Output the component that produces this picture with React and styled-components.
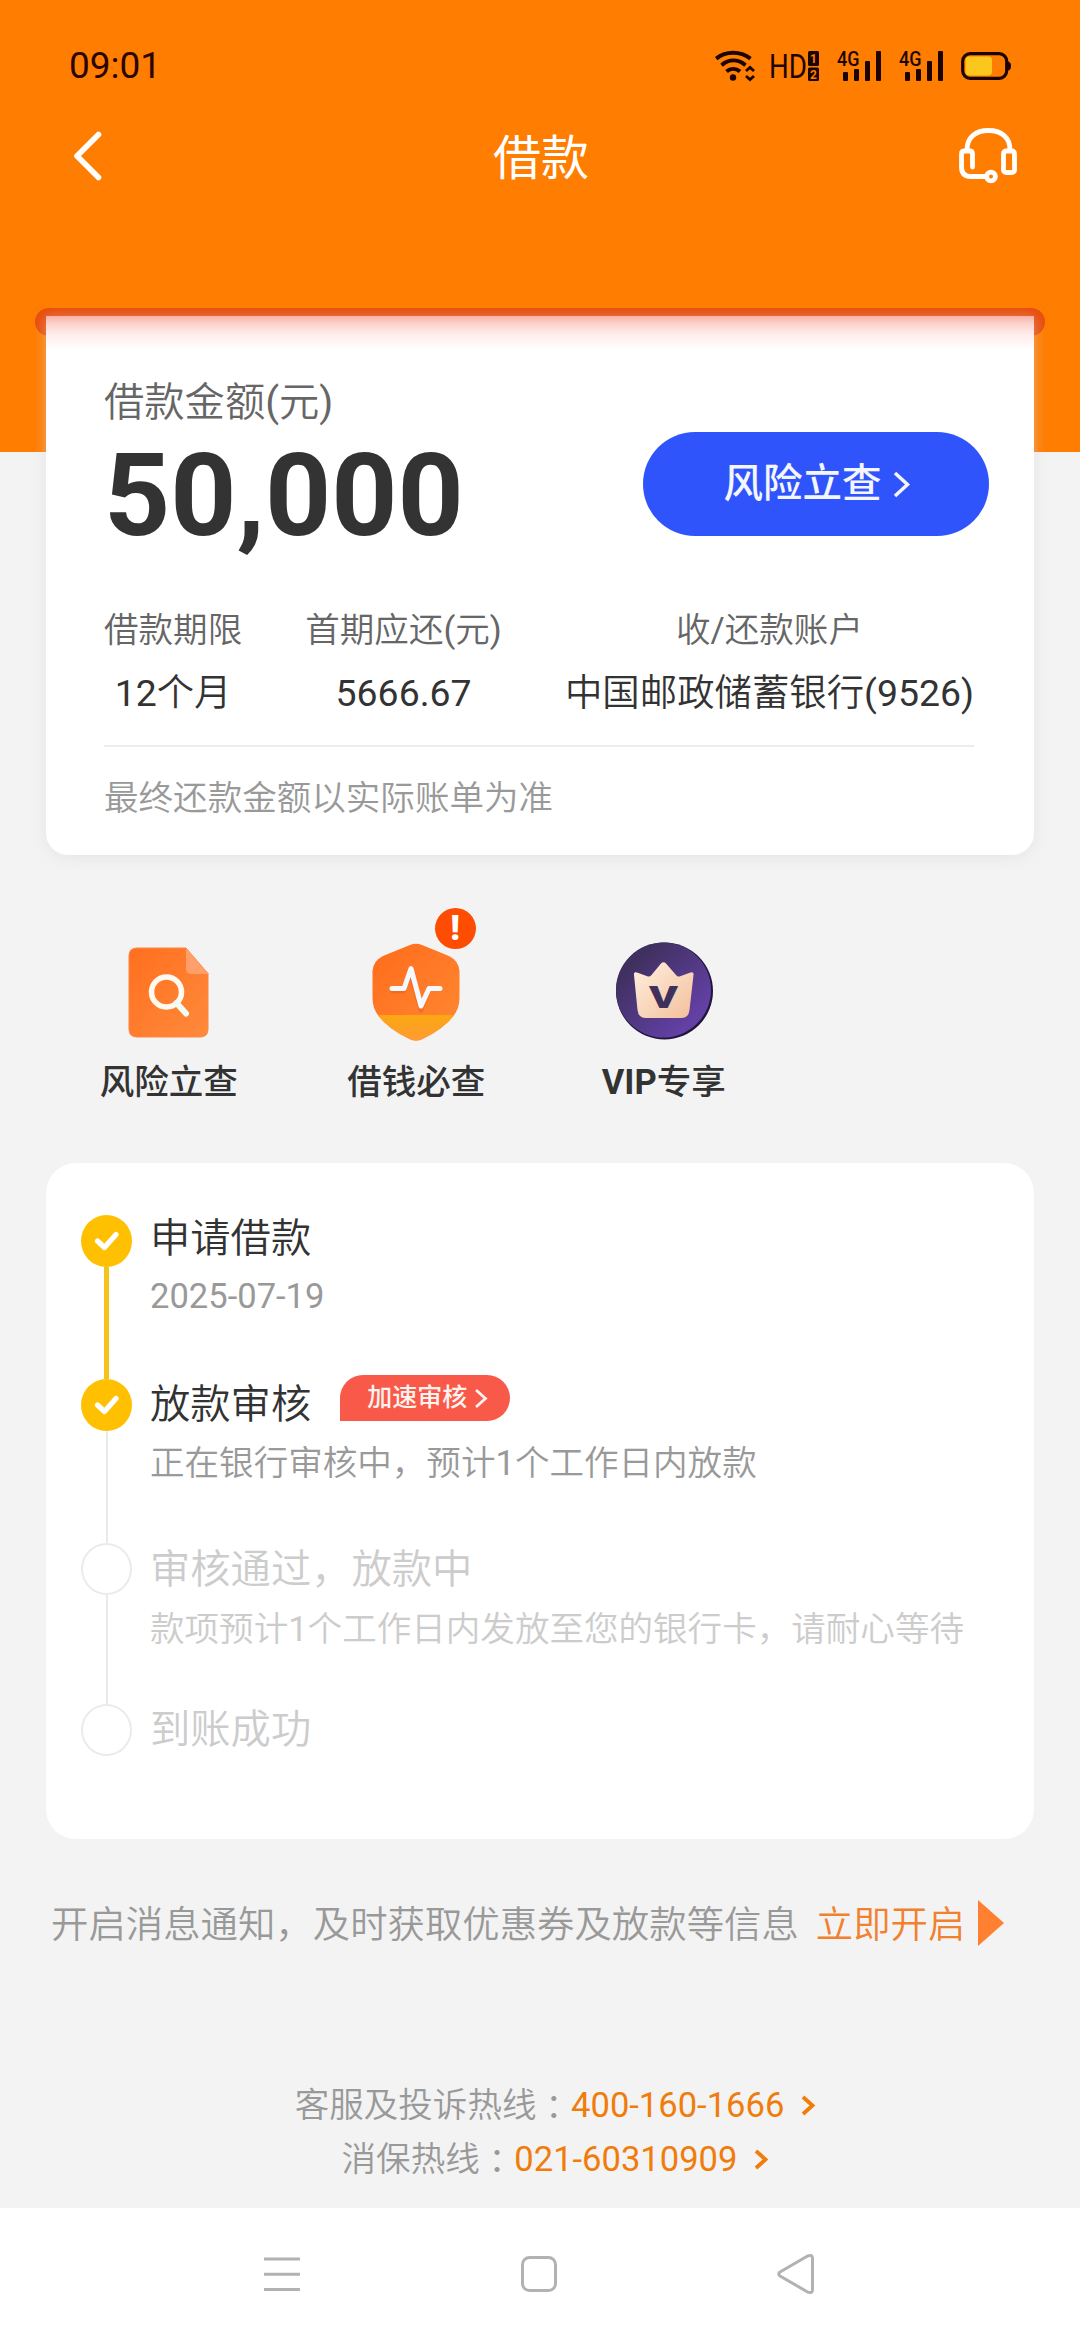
import styled, { createGlobalStyle } from "styled-components";

const steps = [
  { title: "申请借款", desc: "2025-07-19", state: "done", height: 164, shift: 0, gap: 4 },
  {
    title: "放款审核",
    desc: "正在银行审核中，预计1个工作日内放款",
    state: "active",
    height: 164,
    tag: "加速审核",
    shift: 2,
    gap: 5,
  },
  {
    title: "审核通过，放款中",
    desc: "款项预计1个工作日内发放至您的银行卡，请耐心等待",
    state: "todo",
    height: 161,
    shift: 3,
    gap: 6,
  },
  { title: "到账成功", state: "todo", height: 52, shift: 2 },
];

const stats = [
  { label: "借款期限", value: "12个月" },
  { label: "首期应还(元)", value: "5666.67" },
  { label: "收/还款账户", value: "中国邮政储蓄银行(9526)" },
];

const hotlines = [
  { label: "客服及投诉热线", phone: "400-160-1666" },
  { label: "消保热线", phone: "021-60310909" },
];

// Chinese runs are set a little lighter than digits and latin letters
const mixed = (text) =>
  text.split(/([\x21-\x7e]+)/).map((part, index) => (index % 2 ? <Latin key={index}>{part}</Latin> : part));

const WifiIcon = () => (
  <svg width="38" height="32" viewBox="0 0 38 32" fill="none" stroke="#1c0500" strokeWidth="4">
    <path d="M1.2 8.6C11 .8 25 .8 35.5 8.6" />
    <path d="M6.5 15.2C14 9 23 9 30.5 15.2" />
    <path d="M11.5 21.6C15.5 18 21 18 25 21.6" />
    <circle cx="18" cy="27.5" r="3.2" fill="#1c0500" stroke="none" />
    <path d="M31 21l4-3.6 4 3.6M31 26l4 3.6 4-3.6" strokeWidth="2.8" />
  </svg>
);

const HdIcon = () => (
  <svg width="50" height="32" viewBox="0 0 50 32">
    <text x="-1" y="28" fontSize="33" fontWeight="400" fontFamily="Roboto" fill="#1c0500" textLength="38" lengthAdjust="spacingAndGlyphs">
      HD
    </text>
    <rect x="38" y="1" width="11" height="15" rx="1.5" fill="#1c0500" />
    <rect x="38" y="17.5" width="11" height="13.5" rx="1.5" fill="#1c0500" />
    <text x="43.5" y="12.7" fontSize="12" fontWeight="700" fontFamily="Roboto" fill="#ff7d00" textAnchor="middle">
      1
    </text>
    <text x="43.5" y="28.6" fontSize="12" fontWeight="700" fontFamily="Roboto" fill="#ff7d00" textAnchor="middle">
      2
    </text>
  </svg>
);

const SignalIcon = () => (
  <svg width="45" height="32" viewBox="0 0 45 32" fill="#1c0500">
    <text x="0" y="15.6" fontSize="20" fontWeight="500" fontFamily="Roboto" textLength="22.5" lengthAdjust="spacingAndGlyphs">
      4G
    </text>
    <rect x="6" y="22" width="5" height="9" rx="1" />
    <rect x="17" y="19" width="5" height="12" rx="1" />
    <rect x="28" y="11" width="5" height="20" rx="1" />
    <rect x="39" y="1" width="5" height="30" rx="1" />
  </svg>
);

const BatteryIcon = () => (
  <svg width="50" height="32" viewBox="0 0 50 32">
    <rect x="1.7" y="3.7" width="44" height="24.6" rx="7.5" fill="none" stroke="#1c0500" strokeWidth="3.2" />
    <path d="M46.5 11.5q3.5 0 3.5 4.5t-3.5 4.5z" fill="#1c0500" />
    <rect x="4.5" y="6.6" width="26.5" height="18.8" rx="4" fill="#fcc71c" />
  </svg>
);

const BackIcon = () => (
  <svg width="32" height="50" viewBox="0 0 32 50" fill="none" stroke="#fff" strokeWidth="5.6" strokeLinecap="round" strokeLinejoin="round">
    <path d="M26.5 3.5L5 25l21.500 21.500" />
  </svg>
);

const HeadsetIcon = () => (
  <svg width="60" height="60" viewBox="0 0 60 60" fill="none" stroke="#fff" strokeWidth="4.8" strokeLinecap="round" strokeLinejoin="round">
    <path d="M10 24C10 11 19 4.500 31.500 4.500S53 11 53 24" />
    <path d="M15.500 41V28q0-3-3-3H7.500q-3 0-3 3v13q0 9.500 9.500 9.500h15" />
    <rect x="46.500" y="25" width="11" height="21.500" rx="2.500" />
    <circle cx="34" cy="50.500" r="4.400" />
  </svg>
);

const Chevron = ({ width, height, stroke = 3 }) => (
  <svg width={width} height={height} viewBox={`0 0 ${width} ${height}`} fill="none" stroke="currentColor" strokeWidth={stroke}>
    <path d={`M2 2L${width - 2.500} ${height / 2}L2 ${height - 2}`} />
  </svg>
);

const ReportIcon = () => (
  <svg width="98" height="100" viewBox="0 0 98 100">
    <defs>
      <linearGradient id="report" x1="0" y1="0" x2="1" y2="1">
        <stop offset="0" stopColor="#ff6f1e" />
        <stop offset="1" stopColor="#ff8a3c" />
      </linearGradient>
    </defs>
    <path d="M17 7h49l22 25.500v55.500q0 8-8 8H17q-8 0-8-8V15q0-8 8-8z" fill="url(#report)" stroke="#ff8543" strokeWidth="1" />
    <path d="M66 7L88.500 33H71.500q-5.500 0-5.500-5.500z" fill="#ff9f6a" />
    <circle cx="46.500" cy="51" r="15" fill="none" stroke="#fffaf0" strokeWidth="5.500" />
    <path d="M56.500 62l9.500 10.500" stroke="#f1fdf4" strokeWidth="6" strokeLinecap="round" />
  </svg>
);

const ShieldIcon = () => (
  <svg width="98" height="100" viewBox="0 0 98 100">
    <defs>
      <linearGradient id="shield" x1="0" y1="0" x2="1" y2="1">
        <stop offset="0" stopColor="#ff6a1a" />
        <stop offset="1" stopColor="#ff8a33" />
      </linearGradient>
      <linearGradient id="shieldBase" x1="0" y1="0" x2="0" y2="1">
        <stop offset="0" stopColor="#fba713" />
        <stop offset="1" stopColor="#ff9a33" />
      </linearGradient>
      <clipPath id="shieldClip">
        <path d="M43 4q6-2.500 12 0l27 11q10 5 10.500 15v27q0 10-6 18-10 13-31 23-6.500 3-13 0-21-10-31-23-6-8-6-18V30q.500-10 10.500-15z" />
      </clipPath>
    </defs>
    <g clipPath="url(#shieldClip)">
      <rect width="98" height="100" fill="url(#shield)" />
      <rect y="74" width="98" height="26" fill="url(#shieldBase)" />
    </g>
    <path d="M26 50h10l7.500-20L54 69l7.500-21.500H71" fill="none" stroke="#c9511f" strokeOpacity=".3" strokeWidth="5" strokeLinecap="round" strokeLinejoin="round" />
    <path d="M25 47.500h12l7-20L54 65l8-17.500h11" fill="none" stroke="#f6f8ff" strokeWidth="5" strokeLinecap="round" strokeLinejoin="round" />
  </svg>
);

const VipIcon = () => (
  <svg width="98" height="100" viewBox="0 0 98 100">
    <defs>
      <linearGradient id="vip" x1="0" y1="0" x2="1" y2="1">
        <stop offset="0.200" stopColor="#40305f" />
        <stop offset="0.800" stopColor="#6240a4" />
      </linearGradient>
      <linearGradient id="crown" x1="0" y1="0" x2="1" y2="1">
        <stop offset="0" stopColor="#fff0e0" />
        <stop offset="1" stopColor="#f3bf9a" />
      </linearGradient>
    </defs>
    <circle cx="49.500" cy="50" r="48.500" fill="#20153c" />
    <circle cx="48.500" cy="49" r="47.500" fill="url(#vip)" />
    <path
      d="M22 31.500q-3.500-1-3 2.500l3.500 35q1 8 8 8h36q7 0 8-8l4-35q.500-3.500-3-2.500l-11 4q-2 .500-3.500-1.500L51 22.500q-2.500-2.500-5 0L36.500 34q-1.500 2-3.500 1.500z"
      fill="url(#crown)"
    />
    <text x="34" y="67" fontSize="32" fontWeight="900" fontFamily="Roboto" fill="#40305c" textLength="29" lengthAdjust="spacingAndGlyphs">
      V
    </text>
  </svg>
);

const CheckIcon = () => (
  <svg width="26" height="22" viewBox="0 0 26 22" fill="none" stroke="#fff" strokeWidth="5.200" strokeLinecap="round" strokeLinejoin="round">
    <path d="M3.500 11L10.500 17.500L22 4.500" />
  </svg>
);

const shortcuts = [
  { name: "risk", label: "风险立查", icon: <ReportIcon /> },
  { name: "credit", label: "借钱必查", icon: <ShieldIcon />, alert: true },
  { name: "vip", label: <><b>VIP</b>专享</>, icon: <VipIcon /> },
];

const App = () => {
  return (
    <Page>
      <GlobalStyle />
      <Header>
        <StatusBar>
          <Clock>09:01</Clock>
          <StatusIcons>
            <WifiIcon />
            <HdIcon />
            <SignalIcon />
            <SignalIcon />
            <BatteryIcon />
          </StatusIcons>
        </StatusBar>
        <TitleBar>
          <BackIcon />
          <PageTitle>借款</PageTitle>
          <HeadsetIcon />
        </TitleBar>
      </Header>

      <Slot />
      <LoanCard>
        <AmountLabel>{mixed("借款金额(元)")}</AmountLabel>
        <AmountRow>
          <Amount>50,000</Amount>
          <RiskButton>
            <span>风险立查</span>
            <Chevron width={17} height={27} stroke={3.5} />
          </RiskButton>
        </AmountRow>
        <Stats>
          {stats.map((stat) => (
            <Stat key={stat.label}>
              <StatLabel>{mixed(stat.label)}</StatLabel>
              <StatValue>{mixed(stat.value)}</StatValue>
            </Stat>
          ))}
        </Stats>
        <Note>最终还款金额以实际账单为准</Note>
      </LoanCard>

      <Shortcuts>
        {shortcuts.map((item) => (
          <Shortcut key={item.name}>
            {item.icon}
            {item.alert && <Alert>!</Alert>}
            <ShortcutLabel>{item.label}</ShortcutLabel>
          </Shortcut>
        ))}
      </Shortcuts>

      <Timeline>
        {steps.map((step, index) => (
          <Step key={step.title} $height={step.height}>
            <Rail>
              <Dot $todo={step.state === "todo"}>{step.state !== "todo" && <CheckIcon />}</Dot>
              {index < steps.length - 1 && <Line $done={step.state === "done"} />}
            </Rail>
            <StepBody $todo={step.state === "todo"} $shift={step.shift}>
              <StepTitle>
                {step.title}
                {step.tag && (
                  <Tag>
                    {step.tag}
                    <Chevron width={14} height={21} stroke={2.8} />
                  </Tag>
                )}
              </StepTitle>
              {step.desc && <StepDesc $gap={step.gap}>{mixed(step.desc)}</StepDesc>}
            </StepBody>
          </Step>
        ))}
      </Timeline>

      <Notice>
        <span>开启消息通知，及时获取优惠券及放款等信息</span>
        <NoticeLink>立即开启</NoticeLink>
        <Play />
      </Notice>

      <Hotlines>
        {hotlines.map((line) => (
          <Hotline key={line.phone}>
            {line.label}
            <Colon>：</Colon>
            <Phone>
              {line.phone}
              <Chevron width={14} height={21} stroke={3.8} />
            </Phone>
          </Hotline>
        ))}
      </Hotlines>

      <NavBar>
        <svg width="36" height="40" viewBox="0 0 36 40" stroke="#b2b2b2" strokeWidth="3">
          <path d="M0 5h36M0 20.200h36M0 35.400h36" />
        </svg>
        <svg width="36" height="40" viewBox="0 0 36 40" fill="none" stroke="#b2b2b2" strokeWidth="3">
          <rect x="1.500" y="3.500" width="33" height="33" rx="7" />
        </svg>
        <svg width="38" height="40" viewBox="0 0 38 40" fill="none" stroke="#b2b2b2" strokeWidth="3" strokeLinejoin="round">
          <path d="M3 18L31 1.800q4.500-1.500 4.500 2.500v31.400q0 4-4.500 2.500L3 22q-2.500-2 0-4z" />
        </svg>
      </NavBar>
    </Page>
  );
};

export default App;

// STYLING

const GlobalStyle = createGlobalStyle`
  * {
    box-sizing: border-box;
  }

  body {
    margin: 0;
    font-family: Roboto, "Noto Sans CJK SC", sans-serif;
    font-weight: 350;
    background: #f3f3f3;
  }

  svg {
    display: block;
    flex: none;
    overflow: visible;
  }
`;

const Page = styled.main`
  width: 1080px;
  height: 2340px;
  display: flex;
  flex-direction: column;
  overflow: hidden;
  background: #f3f3f3;
`;

const Latin = styled.span`
  font-weight: 400;
`;

const Header = styled.header`
  height: 452px;
  flex: none;
  background: #ff7d00;
`;

const StatusBar = styled.div`
  height: 88px;
  padding: 44px 69px 0;
  display: flex;
  align-items: center;
  justify-content: space-between;
`;

const Clock = styled.span`
  font-size: 37px;
  font-weight: 400;
  line-height: 44px;
  color: #2b0500;
`;

const StatusIcons = styled.div`
  display: flex;
  align-items: center;
  gap: 17px;
`;

const TitleBar = styled.div`
  height: 136px;
  padding: 0 63px 0 72px;
  display: flex;
  align-items: center;
  justify-content: space-between;
`;

const PageTitle = styled.h1`
  margin: 5px 0 0 21px;
  font-size: 48px;
  font-weight: 400;
  line-height: 70px;
  color: #fff;
`;

const Slot = styled.div`
  height: 28px;
  flex: none;
  margin: -144px 35px 0;
  border-radius: 14px;
  background: #e94e0b;
`;

const LoanCard = styled.section`
  height: 539px;
  flex: none;
  margin: -20px 46px 0;
  padding: 59px 60px 0 58px;
  border-radius: 0 0 22px 22px;
  background: linear-gradient(#f9b1a7 0, #fcd3cd 8px, #feecea 18px, #fff 34px);
  box-shadow: 0 2px 14px rgba(215, 215, 215, 0.5);
`;

const AmountLabel = styled.p`
  margin: 0;
  font-size: 40.3px;
  line-height: 56px;
  color: #666;
`;

const AmountRow = styled.div`
  display: flex;
  justify-content: space-between;
  margin-right: -15px;
`;

const Amount = styled.strong`
  margin-top: 7px;
  font-size: 115.5px;
  font-weight: 700;
  line-height: 116px;
  color: #333;
`;

const RiskButton = styled.button`
  width: 346px;
  height: 104px;
  margin-top: 1px;
  padding: 0 0 0 1px;
  border: 0;
  border-radius: 52px;
  display: flex;
  align-items: center;
  justify-content: center;
  gap: 11px;
  font-family: inherit;
  font-size: 39.5px;
  font-weight: 500;
  line-height: 50px;
  color: #f3f6ff;
  background: #2f54fb;
`;

const Stats = styled.div`
  margin-top: 51px;
  padding-bottom: 27px;
  display: flex;
  justify-content: space-between;
  border-bottom: 2px solid #ececec;
`;

const Stat = styled.div`
  display: flex;
  flex-direction: column;
  align-items: center;
  gap: 13px;
  line-height: 50px;
`;

const StatLabel = styled.span`
  font-size: 34.56px;
  color: #666;
`;

const StatValue = styled.span`
  font-size: 37.4px;
  color: #333;
`;

const Note = styled.p`
  margin: 26px 0 0;
  font-size: 34.56px;
  line-height: 50px;
  color: #999;
`;

const Shortcuts = styled.nav`
  height: 308px;
  flex: none;
  margin: 0 45px;
  padding-top: 86px;
  display: grid;
  grid-template-columns: repeat(4, 1fr);
`;

const Shortcut = styled.div`
  position: relative;
  display: flex;
  flex-direction: column;
  align-items: center;
`;

const Alert = styled.span`
  position: absolute;
  top: -33px;
  left: 142px;
  width: 41px;
  height: 41px;
  border-radius: 50%;
  font-size: 35px;
  font-weight: 900;
  line-height: 42px;
  text-align: center;
  color: #fff;
  background: #fe4d02;
`;

const ShortcutLabel = styled.span`
  margin-top: 16px;
  font-size: 34.56px;
  font-weight: 500;
  line-height: 50px;
  color: #333;
`;

const Timeline = styled.section`
  height: 676px;
  flex: none;
  margin: 0 46px;
  padding: 52px 35px 0;
  border-radius: 30px;
  background: #fff;
`;

const Step = styled.div`
  height: ${({ $height }) => $height}px;
  display: flex;
  gap: 18px;
`;

const Rail = styled.div`
  width: 51px;
  display: flex;
  flex-direction: column;
  align-items: center;
`;

const Dot = styled.span`
  width: 51px;
  height: 52px;
  flex: none;
  border-radius: 50%;
  display: flex;
  align-items: center;
  justify-content: center;
  border: ${({ $todo }) => ($todo ? "2.500px solid #ebebeb" : "0")};
  background: ${({ $todo }) => ($todo ? "#fff" : "#ffc002")};
`;

const Line = styled.span`
  width: ${({ $done }) => ($done ? 5 : 2)}px;
  flex: 1;
  background: ${({ $done }) => ($done ? "#f6c31c" : "#eaeaea")};
`;

const StepBody = styled.div`
  margin-top: ${({ $shift }) => $shift - 4}px;
  color: ${({ $todo }) => ($todo ? "#ccc" : "#333")};

  p {
    color: ${({ $todo }) => ($todo ? "#ccc" : "#999")};
  }
`;

const StepTitle = styled.h2`
  margin: 0;
  display: flex;
  align-items: center;
  gap: 29px;
  font-size: 40.3px;
  font-weight: inherit;
  line-height: 56px;
`;

const StepDesc = styled.p`
  margin: ${({ $gap }) => $gap}px 0 0;
  font-size: 34.56px;
  line-height: 50px;
`;

const Tag = styled.span`
  width: 170px;
  height: 46px;
  margin-top: -14px;
  padding-left: 27px;
  border-radius: 23px 23px 23px 0;
  display: flex;
  align-items: center;
  gap: 7px;
  font-size: 25px;
  font-weight: 500;
  line-height: 46px;
  color: #fff3f0;
  background: #f95949;
`;

const Notice = styled.div`
  height: 60px;
  flex: none;
  margin: 54px 0 0 51px;
  display: flex;
  align-items: center;
  font-size: 37.4px;
  line-height: 54px;
  color: #999;

  span:first-child,
  a {
    padding-top: 3px;
  }
`;

const NoticeLink = styled.a`
  margin: 0 13px 0 17px;
  color: #f1802f;
`;

const Play = styled.span`
  border-left: 26px solid #ff8030;
  border-top: 23px solid transparent;
  border-bottom: 23px solid transparent;
`;

const Hotlines = styled.footer`
  margin: 125px 0 0 30px;
  display: flex;
  flex-direction: column;
  align-items: center;
`;

const Hotline = styled.div`
  display: flex;
  align-items: center;
  font-size: 34.56px;
  line-height: 54px;
  color: #999;
`;

const Colon = styled.span`
  font-family: "Noto Sans CJK TC", sans-serif;
`;

const Phone = styled.a`
  display: flex;
  align-items: center;
  gap: 17px;
  font-weight: 400;
  color: #f07c0c;
`;

const NavBar = styled.nav`
  height: 132px;
  flex: none;
  margin-top: auto;
  padding: 0 265px 0 264px;
  display: flex;
  align-items: center;
  justify-content: space-between;
  background: #fff;
`;
